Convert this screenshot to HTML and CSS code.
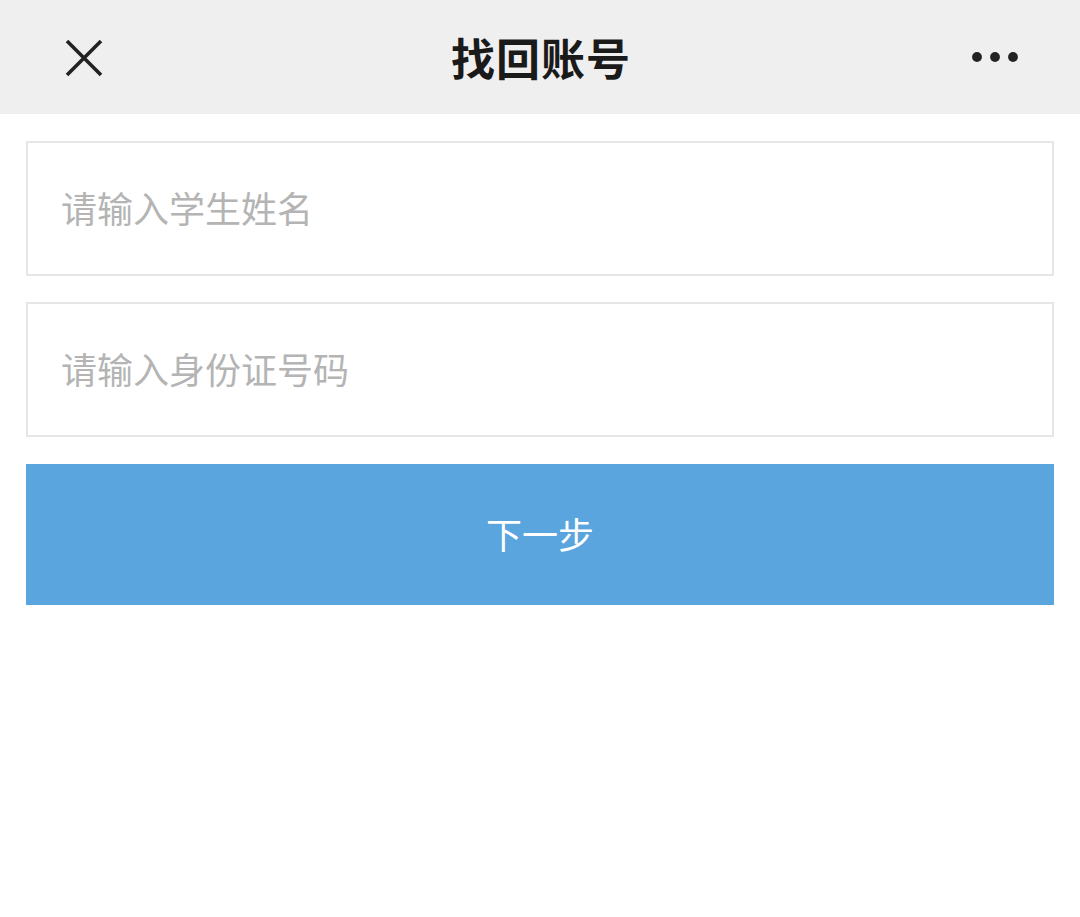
FILE: index.html
```html
<!DOCTYPE html>
<html lang="zh">
<head>
<meta charset="utf-8">
<title>找回账号</title>
<link rel="stylesheet" href="styles.css">
</head>
<body>
<header class="nav">
  <div class="nav-left">
    <svg class="icon-close" width="40" height="40" viewBox="0 0 40 40"><path d="M3 3 L37 37 M37 3 L3 37" stroke="#222" stroke-width="3.6" stroke-linecap="butt" fill="none"/></svg>
  </div>
  <h1 class="nav-title">找回账号</h1>
  <div class="nav-right">
    <svg class="icon-more" width="50" height="12" viewBox="0 0 50 12"><circle cx="7" cy="6" r="4.9" fill="#222"/><circle cx="25" cy="6" r="4.9" fill="#222"/><circle cx="43" cy="6" r="4.9" fill="#222"/></svg>
  </div>
</header>
<main class="form">
  <div class="field"><input class="input" type="text" placeholder="请输入学生姓名"></div>
  <div class="field"><input class="input" type="text" placeholder="请输入身份证号码"></div>
  <button class="btn" type="button">下一步</button>
</main>
</body>
</html>
```
FILE: styles.css
```css
* { box-sizing: border-box; }
html, body { margin: 0; padding: 0; background: #fff; }
body { font-family: "Noto Sans CJK SC", "Noto Sans", sans-serif; }
.nav {
  height: 114px;
  background: #efefef;
  display: grid;
  grid-template-columns: 1fr auto 1fr;
  align-items: center;
  padding: 0 60px 0 64px;
}
.nav-left, .nav-right { display: flex; align-items: center; }
.nav-right { justify-content: flex-end; }
.icon-close { display: block; margin-top: 2px; }
.icon-more { display: block; }
.nav-title {
  margin: 0 2px 0 0;
  font-size: 44px;
  font-weight: 700;
  color: #1a1a1a;
  letter-spacing: 1px;
  line-height: 1;
}
.form {
  padding: 27px 26px 0;
  display: flex;
  flex-direction: column;
  gap: 26px;
}
.field {
  height: 135px;
  border: 2px solid #e6e6e6;
  background: #fff;
  display: flex;
  align-items: center;
}
.input {
  width: 100%;
  border: none;
  outline: none;
  background: transparent;
  font-family: "Noto Sans CJK SC", "Noto Sans", sans-serif;
  font-size: 36px;
  color: #333;
  padding: 0 0 4px 33px;
}
.input::placeholder { color: #b4b4b4; }
.btn {
  height: 141px;
  margin-top: 1px;
  border: none;
  background: #5aa5de;
  color: #fff;
  font-family: "Noto Sans CJK SC", "Noto Sans", sans-serif;
  font-size: 36px;
  padding: 0 0 4px;
  cursor: pointer;
}
```
